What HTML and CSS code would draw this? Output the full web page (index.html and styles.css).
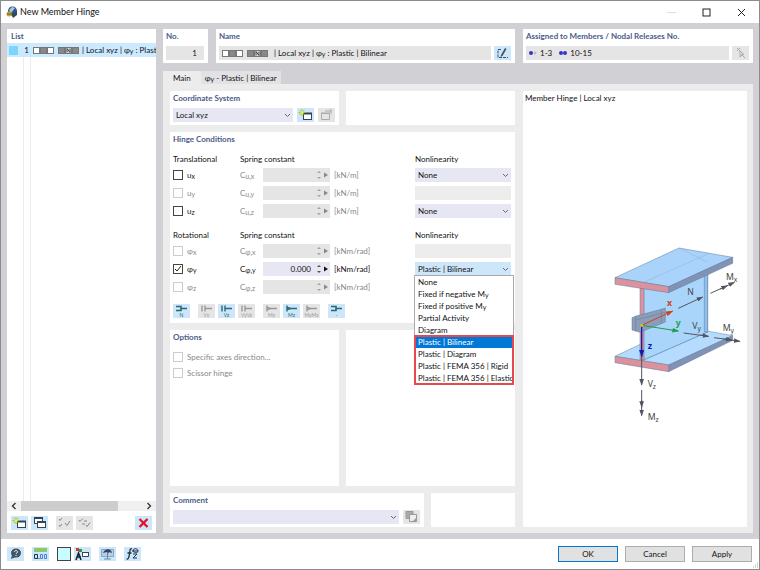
FILE: index.html
```html
<!DOCTYPE html>
<html lang="en">
<head>
<meta charset="utf-8">
<meta name="viewport" content="width=device-width, initial-scale=1">
<title>New Member Hinge</title>
<link rel="stylesheet" href="styles.css">
</head>
<body>
<!-- shared symbols -->
<svg class="defs" aria-hidden="true">
  <symbol id="boxes" viewBox="0 0 46 7">
    <g stroke="#777" fill="#fff">
      <rect x=".5" y=".5" width="6" height="6"/><rect x="7.5" y=".5" width="6" height="6" fill="#888"/><rect x="14.5" y=".5" width="6" height="6"/>
      <rect x="25.5" y=".5" width="6" height="6" fill="#888"/><rect x="32.5" y=".5" width="6" height="6" fill="#ddd"/><rect x="39.5" y=".5" width="6" height="6" fill="#888"/>
    </g>
    <path d="M34 5.5V1.5L37 5.5V1.5" fill="none" stroke="#222" stroke-width=".8"/>
  </symbol>
  <symbol id="newwin" viewBox="0 0 17 14">
    <rect x="6.5" y="5.500" width="8" height="6" fill="#fff" stroke="#345"/><path d="M6 5.5h9" stroke="#345" stroke-width="2"/>
    <path d="M5 1v7M1.500 4.500h7M2.500 2l5 5M7.500 2l-5 5" stroke="#9bc72c" stroke-width="1"/><circle cx="5" cy="4.500" r="1.500" fill="#e8f06a"/>
  </symbol>
  <symbol id="beamfork" viewBox="0 0 17 14">
    <path d="M3 2.5h5v4H3M8 4.500h6" fill="none" stroke="currentColor" stroke-width="1.600"/>
  </symbol>
  <symbol id="beamplate" viewBox="0 0 17 14">
    <path d="M4 1.5v6M7 1.500v6M7 4.500h7" fill="none" stroke="currentColor" stroke-width="1.400"/>
  </symbol>
  <symbol id="beamhinge" viewBox="0 0 17 14">
    <path d="M4 1.5v6M4 3.500l4 1-4 1M8 4.500h6" fill="none" stroke="currentColor" stroke-width="1.400"/>
  </symbol>
  <symbol id="arrows" viewBox="0 0 15 14">
    <path d="M2 5l2-2 2 2zM2 9l2 2 2-2z" fill="currentColor" opacity=".7"/><path d="M9 4.5v5l4-2.500z" fill="currentColor"/>
  </symbol>
</svg>

<div class="window">
  <header class="titlebar">
    <svg class="logo" viewBox="0 0 12 12"><circle cx="6.5" cy="5" r="4.500" fill="#315a85"/><path d="M3 4l3-3 3 1-4 5z" fill="#a9c6df"/><path d="M5 8l6-3v4l-4 3z" fill="#31485f"/><circle cx="3" cy="8" r="2.500" fill="#c4a83a"/><path d="M1 8h4" stroke="#725c17"/></svg>
    <h1>New Member Hinge</h1>
    <button class="win-btn" aria-label="Minimize" disabled><svg viewBox="0 0 9 9"><path d="M0 4.5h9" stroke="#ddd"/></svg></button>
    <button class="win-btn" aria-label="Maximize"><svg viewBox="0 0 9 9"><rect x="1" y="1" width="7" height="7" fill="none" stroke="#222"/></svg></button>
    <button class="win-btn" aria-label="Close"><svg viewBox="0 0 9 9"><path d="M1 1l7 7M8 1L1 8" stroke="#222"/></svg></button>
  </header>

  <div class="workspace">
    <aside class="panel list">
      <h2>List</h2>
      <div class="list-body">
        <div class="list-row selected">
          <span class="swatch"></span><span class="row-no">1</span>
          <svg class="boxes"><use href="#boxes"/></svg>
          <span class="row-name">| Local xyz | φ<sub>y</sub> : Plastic | Bilinear</span>
        </div>
        <div class="list-lines"></div>
      </div>
      <div class="scrollbar">
        <svg viewBox="0 0 10 10"><path d="M6.5 2L3.500 5l3 3" fill="none" stroke="#333" stroke-width="1.300"/></svg>
        <div class="track"><div class="thumb"></div></div>
        <svg viewBox="0 0 10 10"><path d="M3.5 2l3 3-3 3" fill="none" stroke="#333" stroke-width="1.300"/></svg>
      </div>
      <div class="toolbar">
        <button class="icon" aria-label="New"><svg><use href="#newwin"/></svg></button>
        <button class="icon" aria-label="Copy"><svg viewBox="0 0 17 14"><g fill="#fff" stroke="#345"><rect x="3.5" y="1.500" width="8" height="6"/><path d="M3 2h9" stroke-width="2"/><rect x="6.500" y="5.500" width="8" height="6"/><path d="M6 6h9" stroke-width="2"/></g></svg></button>
        <button class="icon off gap" aria-label="Select all" disabled><svg viewBox="0 0 17 14"><path d="M3 3l1 1.500L6 2M3 9l1 1.500L6 8M9 7l2 2.500L14 5" fill="none" stroke="#888"/></svg></button>
        <button class="icon off" aria-label="Invert selection" disabled><svg viewBox="0 0 17 14"><path d="M3 4l1 1.500L7 2.500M8 5h3M6 8h3M10 9l1 1.500 3-4" fill="none" stroke="#888"/></svg></button>
        <button class="icon push" aria-label="Delete"><svg viewBox="0 0 17 14"><path d="M4.500 3l8 8M12.500 3l-8 8" stroke="#e0142b" stroke-width="2.400"/></svg></button>
      </div>
    </aside>

    <main class="editor">
      <div class="top-row">
        <section class="panel">
          <h2><label for="no">No.</label></h2>
          <input class="field right" id="no" type="text" value="1" readonly>
        </section>
        <section class="panel">
          <h2>Name</h2>
          <div class="line">
            <div class="field grow"><svg class="boxes"><use href="#boxes"/></svg><span class="row-name">| Local xyz | φ<sub>y</sub> : Plastic | Bilinear</span></div>
            <button class="icon" aria-label="Edit name"><svg viewBox="0 0 17 14"><path d="M7 3.500H4v8h4M9 11.500h5" fill="none" stroke="#357" stroke-dasharray="3 1"/><path d="M7 9l4-7 1.500 1-4 7-2 1z" fill="#456"/></svg></button>
          </div>
        </section>
        <section class="panel">
          <h2>Assigned to Members / Nodal Releases No.</h2>
          <div class="line">
            <div class="field grow assigned">
              <svg class="dots" viewBox="0 0 8 4"><circle cx="2" cy="2" r="2" fill="#33c"/><circle cx="6" cy="2" r="1.500" fill="#bbc"/></svg><span>1-3</span>
              <svg class="dots" viewBox="0 0 8 4"><circle cx="2" cy="2" r="2" fill="#33c"/><circle cx="6" cy="2" r="2" fill="#33c"/></svg><span>10-15</span>
            </div>
            <button class="icon off" aria-label="Pick members" disabled><svg viewBox="0 0 17 14"><path d="M5 2l3 3M8 2L5 5M8 5v6l2-2 3 3M8 5l4 3.500-3 .5" fill="none" stroke="#aaa"/></svg></button>
          </div>
        </section>
      </div>

      <nav class="tabs">
        <button class="tab active">Main</button>
        <button class="tab">φ<sub>y</sub> - Plastic | Bilinear</button>
      </nav>

      <div class="tab-page">
        <div class="form">
          <div class="split">
            <section class="panel">
              <h2><label for="cs">Coordinate System</label></h2>
              <div class="line">
                <select class="field select grow" id="cs"><option>Local xyz</option></select>
                <button class="icon" aria-label="New coordinate system"><svg><use href="#newwin"/></svg></button>
                <button class="icon off" aria-label="Edit coordinate system" disabled><svg viewBox="0 0 17 14"><path d="M3.500 5.500h8v6h-8zM3 5h9M7 3h6v3M12 1l2 2" fill="none" stroke="#aaa"/></svg></button>
              </div>
            </section>
            <section class="panel"></section>
          </div>

          <section class="panel hinge">
            <h2>Hinge Conditions</h2>
            <div class="row head"><span>Translational</span><span class="wide">Spring constant</span><span class="last">Nonlinearity</span></div>
            <div class="row">
              <label class="check"><input type="checkbox"><span>u<sub>x</sub></span></label>
              <label class="dim" for="cux">C<sub>u,x</sub></label>
              <div class="spin"><input id="cux" type="text" disabled><svg><use href="#arrows"/></svg></div>
              <span class="unit dim">[kN/m]</span>
              <select class="field select" aria-label="Nonlinearity ux"><option>None</option></select>
            </div>
            <div class="row">
              <label class="check"><input type="checkbox" disabled><span>u<sub>y</sub></span></label>
              <label class="dim" for="cuy">C<sub>u,y</sub></label>
              <div class="spin"><input id="cuy" type="text" disabled><svg><use href="#arrows"/></svg></div>
              <span class="unit dim">[kN/m]</span>
              <select class="field" aria-label="Nonlinearity uy" disabled></select>
            </div>
            <div class="row">
              <label class="check"><input type="checkbox"><span>u<sub>z</sub></span></label>
              <label class="dim" for="cuz">C<sub>u,z</sub></label>
              <div class="spin"><input id="cuz" type="text" disabled><svg><use href="#arrows"/></svg></div>
              <span class="unit dim">[kN/m]</span>
              <select class="field select" aria-label="Nonlinearity uz"><option>None</option></select>
            </div>

            <div class="row head second"><span>Rotational</span><span class="wide">Spring constant</span><span class="last">Nonlinearity</span></div>
            <div class="row">
              <label class="check"><input type="checkbox" disabled><span>φ<sub>x</sub></span></label>
              <label class="dim" for="cpx">C<sub>φ,x</sub></label>
              <div class="spin"><input id="cpx" type="text" disabled><svg><use href="#arrows"/></svg></div>
              <span class="unit dim">[kNm/rad]</span>
              <select class="field" aria-label="Nonlinearity phi x" disabled></select>
            </div>
            <div class="row">
              <label class="check"><input type="checkbox" checked><span>φ<sub>y</sub></span></label>
              <label for="cpy">C<sub>φ,y</sub></label>
              <div class="spin on"><input id="cpy" type="text" value="0.000"><svg><use href="#arrows"/></svg></div>
              <span class="unit">[kNm/rad]</span>
              <div class="combo">
                <select class="field select open" aria-label="Nonlinearity phi y"><option>Plastic | Bilinear</option></select>
                <div class="menu" role="listbox" aria-label="Nonlinearity options">
                  <div role="option">None</div>
                  <div role="option">Fixed if negative M<sub>y</sub></div>
                  <div role="option">Fixed if positive M<sub>y</sub></div>
                  <div role="option">Partial Activity</div>
                  <div role="option">Diagram</div>
                  <div class="marked">
                    <div role="option" class="current" aria-selected="true">Plastic | Bilinear</div>
                    <div role="option">Plastic | Diagram</div>
                    <div role="option">Plastic | FEMA 356 | Rigid</div>
                    <div role="option">Plastic | FEMA 356 | Elastic</div>
                  </div>
                </div>
              </div>
            </div>
            <div class="row">
              <label class="check"><input type="checkbox" disabled><span>φ<sub>z</sub></span></label>
              <label class="dim" for="cpz">C<sub>φ,z</sub></label>
              <div class="spin"><input id="cpz" type="text" disabled><svg><use href="#arrows"/></svg></div>
              <span class="unit dim">[kNm/rad]</span>
            </div>

            <div class="toolbar presets">
              <button class="icon txt"><svg><use href="#beamfork"/></svg><span>N</span></button>
              <button class="icon txt off gap" disabled><svg><use href="#beamplate"/></svg><span>Vy</span></button>
              <button class="icon txt"><svg><use href="#beamplate"/></svg><span>Vz</span></button>
              <button class="icon txt off" disabled><svg><use href="#beamplate"/></svg><span>VyVz</span></button>
              <button class="icon txt off gap" disabled><svg><use href="#beamhinge"/></svg><span>My</span></button>
              <button class="icon txt"><svg><use href="#beamhinge"/></svg><span>Mz</span></button>
              <button class="icon txt off" disabled><svg><use href="#beamhinge"/></svg><span>MyMz</span></button>
              <button class="icon txt gap"><svg><use href="#beamfork"/></svg><span>-</span></button>
            </div>
          </section>

          <div class="split fill">
            <section class="panel options">
              <h2>Options</h2>
              <label class="check dim"><input type="checkbox" disabled><span>Specific axes direction...</span></label>
              <label class="check dim"><input type="checkbox" disabled><span>Scissor hinge</span></label>
            </section>
            <section class="panel"></section>
          </div>

          <div class="split comment">
            <section class="panel">
              <h2><label for="comment">Comment</label></h2>
              <div class="line">
                <select class="field select grow" id="comment"><option></option></select>
                <button class="icon off" aria-label="Comment templates" disabled><svg viewBox="0 0 17 14"><path d="M3 1.500h7v7H3z" fill="#aaa" stroke="#999"/><path d="M6.500 4.500h7v7h-7z" fill="#eee" stroke="#999"/><path d="M13 8v4H9z" fill="#999"/></svg></button>
              </div>
            </section>
            <section class="panel"></section>
          </div>
        </div>

        <section class="panel preview">
          <p>Member Hinge | Local xyz</p>
          <svg class="beam" viewBox="0 30 441 570">
            <defs>
              <marker id="tip" viewBox="0 0 20 14" refX="18" refY="7" markerWidth="20" markerHeight="14" markerUnits="userSpaceOnUse" orient="auto"><path d="M0 0l20 7-20 7z" fill="#54545f"/></marker>
              <marker id="tipx" viewBox="0 0 20 14" refX="18" refY="7" markerWidth="22" markerHeight="16" markerUnits="userSpaceOnUse" orient="auto"><path d="M0 0l20 7-20 7z" fill="#d63c1d"/></marker>
              <marker id="tipy" viewBox="0 0 20 14" refX="18" refY="7" markerWidth="20" markerHeight="16" markerUnits="userSpaceOnUse" orient="auto"><path d="M0 0l20 7-20 7z" fill="#1aa04a"/></marker>
              <marker id="tipz" viewBox="0 0 20 14" refX="18" refY="7" markerWidth="24" markerHeight="16" markerUnits="userSpaceOnUse" orient="auto"><path d="M0 0l20 7-20 7z" fill="#0a20b0"/></marker>
            </defs>
            <g stroke="#5a7b9c" stroke-width="1.500" stroke-linejoin="round">
              <path d="M45 379L237 288 398 317 206 405z" fill="#b5dcff"/>
              <path d="M206 405L398 317V331L206 425z" fill="#8292b5"/>
              <path d="M45 379L206 405V425L45 398z" fill="#dc929d"/>
              <path d="M131 173L323 85V306L131 390z" fill="#a9d5fb"/>
              <path d="M313 90V306L323 306V85z" fill="#8fc0ec"/>
              <path d="M120 174h12V391l-12-2z" fill="#dc929d"/>
              <path d="M45 143L237 54 398 82 206 170z" fill="#a9d3fa"/>
              <path d="M237 54L323 96M131 157L323 72" fill="none" opacity=".35"/>
              <path d="M206 170L398 82V100L206 188z" fill="#8292b5"/>
              <path d="M45 143L206 170V188L45 163z" fill="#dc929d"/>
              <path d="M131 390L323 306M210 301l25 4" fill="none" opacity=".6"/>
              <path d="M96 263L108 258 184 238 196 234V276L120 307 96 300z" fill="#8c9db8"/>
              <path d="M107 260V304M184 238V281M108 270L196 247" fill="none"/>
            </g>
            <g fill="none" stroke="#54545f" stroke-width="3">
              <path d="M235 235L308 201" marker-end="url(#tip)"/>
              <path d="M331 190L382 167" marker-end="url(#tip)"/><path d="M360 177L403 157" marker-end="url(#tip)"/>
              <path d="M251 309L326 319" marker-end="url(#tip)"/>
              <path d="M342 323L396 330" marker-end="url(#tip)"/><path d="M370 327L420 334" marker-end="url(#tip)"/>
              <path d="M125 380V465" marker-end="url(#tip)"/>
              <path d="M125 480V532" marker-end="url(#tip)"/><path d="M125 510V557" marker-end="url(#tip)"/>
              <path d="M125 286L218 243" stroke="#d63c1d" marker-end="url(#tipx)"/>
              <path d="M125 286L235 303" stroke="#1aa04a" marker-end="url(#tipy)"/>
              <path d="M125 286V380" stroke="#0a20b0" stroke-width="4" marker-end="url(#tipz)"/>
            </g>
            <circle cx="125" cy="286" r="5" fill="#d8b52a"/>
            <g class="beam-text">
              <text x="262" y="195">N</text>
              <text x="378" y="151">M<tspan class="s" dy="6">x</tspan></text>
              <text x="277" y="296">V<tspan class="s" dy="6">y</tspan></text>
              <text x="368" y="304">M<tspan class="s" dy="6">y</tspan></text>
              <text x="143" y="470">V<tspan class="s" dy="6">z</tspan></text>
              <text x="143" y="571">M<tspan class="s" dy="6">z</tspan></text>
              <text class="ax-x" x="201" y="228">x</text>
              <text class="ax-y" x="227" y="288">y</text>
              <text class="ax-z" x="143" y="357">z</text>
            </g>
          </svg>
        </section>
      </div>
    </main>
  </div>

  <footer class="footer">
    <button class="icon" aria-label="Help"><svg viewBox="0 0 17 14"><ellipse cx="9" cy="6" rx="5" ry="4.500" fill="#456"/><path d="M5 8l-1 4 5-2z" fill="#456"/><path d="M7.500 5c0-2 3-2 3 0 0 1-1.500 1-1.500 2M9 8v1" fill="none" stroke="#fff"/></svg></button>
    <button class="icon space" aria-label="Units"><svg viewBox="0 0 17 14"><path d="M2 1h13v4H2z" fill="#8dc96b"/><path d="M2.500 7.500h3v4h-3zM7 12v-1" fill="none" stroke="#234"/><path d="M8.500 7.500h2v4h-2zM12.500 7.500h2v4h-2z" fill="none" stroke="#4a7fe0"/></svg></button>
    <button class="color space" aria-label="Color"></button>
    <button class="icon" aria-label="Display properties"><svg viewBox="0 0 17 14"><path d="M2 1h3v3H2z" fill="#d33"/><path d="M5 2h3v3H5z" fill="#2a9a3a"/><path d="M2 13l2.500-7L7 13M3 10h4" fill="none" stroke="#123" stroke-width="1.500"/><path d="M8.500 5.500h6v4h-6zM8 5.500h7" fill="#fff" stroke="#345"/></svg></button>
    <button class="icon space" aria-label="View"><svg viewBox="0 0 17 14"><path d="M2.500 2.500h12v7h-12z" fill="#b5cfe8" stroke="#8ab"/><path d="M4 6c2-5 8-5 9 0l-3-1-1 2-1-2z" fill="#346"/><path d="M8.500 6v6M5 12h7" stroke="#68a"/></svg></button>
    <button class="icon space" aria-label="Formula"><svg viewBox="0 0 17 14"><path d="M8 2c-2-1-2 1-2.500 5S4 12.500 2.500 12M3.500 6h4" fill="none" stroke="#234" stroke-width="1.300"/><path d="M9 7h4l-4 4h4M9 4c0-3 5-3 5 0s-5 1-5 0M8 4h6" fill="none" stroke="#234"/></svg></button>
    <div class="actions">
      <button class="btn primary">OK</button>
      <button class="btn">Cancel</button>
      <button class="btn">Apply</button>
    </div>
    <svg class="grip" viewBox="0 0 7 7"><path d="M5 1h1M3 3h1M5 3h1M1 5h1M3 5h1M5 5h1" stroke="#aaa"/></svg>
  </footer>
</div>
</body>
</html>
```
FILE: styles.css
```css
* {
  box-sizing: border-box;
}
body {
  margin: 0;
  font-family: Lato, "Noto Sans", sans-serif;
  font-size: 8px;
  line-height: 12px;
  color: #111;
}
button, input, select {
  font: inherit;
  color: inherit;
  margin: 0;
  padding: 0;
  border: 0;
  border-radius: 0;
  appearance: none;
}
h1, h2, p {
  margin: 0;
}
sub {
  font-size: 7px;
  line-height: 0;
  vertical-align: -1px;
}
.defs {
  display: block;
  width: 0;
  height: 0;
}
.window {
  display: flex;
  flex-direction: column;
  min-height: 100vh;
  border: 1px solid #8c8c8c;
  background: #fff;
}

/* title bar */
.titlebar {
  display: flex;
  align-items: center;
  height: 22px;
  padding: 0 8px 0 5px;
}
.logo {
  width: 12px;
  height: 12px;
  margin-right: 2px;
}
.titlebar h1 {
  flex: 1;
  font-size: 9px;
  font-weight: normal;
}
.win-btn {
  width: 19px;
  height: 20px;
  margin-left: 16px;
  background: none;
}
.win-btn svg {
  width: 9px;
  height: 9px;
  vertical-align: middle;
}

/* layout */
.workspace {
  flex: 1;
  display: flex;
  gap: 7px;
  padding: 6px;
  background: #d0d0d5;
}
.panel {
  background: #fff;
  padding: 2px 4px 3px 3px;
  min-width: 0;
}
.panel h2 {
  font-size: 8px;
  font-weight: bold;
  color: #4b5b88;
  line-height: 10px;
  margin-bottom: 5px;
}
.editor {
  flex: 1;
  min-width: 0;
  display: flex;
  flex-direction: column;
}
.top-row {
  display: grid;
  grid-template-columns: 45px 1fr 230px;
  gap: 8px;
}
.line {
  display: flex;
  gap: 3px;
}
.grow {
  flex: 1;
  min-width: 0;
}
.field {
  display: flex;
  align-items: center;
  gap: 3px;
  width: 100%;
  height: 14px;
  padding: 0 3px;
  background: #e5e5e5;
}
.field.right {
  text-align: right;
  padding-right: 7px;
}
.select {
  background: #e7e7f3 url("data:image/svg+xml,%3Csvg xmlns='http://www.w3.org/2000/svg' width='7' height='5'%3E%3Cpath d='M1 1l2.500 2.500L6 1' fill='none' stroke='%23667'/%3E%3C/svg%3E") no-repeat right 2px center;
}
.boxes {
  flex: none;
  width: 46px;
  height: 7px;
}
.row-name {
  margin-left: 3px;
}
.assigned .dots {
  width: 8px;
  height: 4px;
}
.assigned span {
  margin-right: 4px;
}

/* icon buttons */
.icon {
  flex: none;
  width: 17px;
  height: 14px;
  background: #cde6fa;
}
.icon svg {
  display: block;
  width: 17px;
  height: 14px;
}
.icon.off {
  background: #e5e5e5;
}
.toolbar {
  display: flex;
  gap: 3px;
}
.toolbar .gap {
  margin-left: 5px;
}
.toolbar .push {
  margin-left: auto;
}
.icon.txt {
  display: flex;
  flex-direction: column;
  align-items: center;
  color: #276a70;
}
.icon.txt.off {
  color: #999;
}
.icon.txt svg {
  flex: none;
  margin-bottom: -6px;
}
.icon.txt span {
  font-size: 5px;
  line-height: 6px;
}

/* list */
.list {
  width: 149px;
  display: flex;
  flex-direction: column;
  padding: 2px 0 3px;
}
.list h2 {
  padding: 0 4px;
  margin-bottom: 2px;
}
.list-body {
  flex: 1;
  display: flex;
  flex-direction: column;
}
.list-row {
  display: flex;
  align-items: center;
  height: 14px;
  padding-left: 2px;
  overflow: hidden;
  white-space: nowrap;
}
.list-row.selected {
  background: #cbe9ff;
}
.swatch {
  flex: none;
  width: 9px;
  height: 9px;
  background: #7fd4fb;
}
.row-no {
  flex: none;
  width: 15px;
  padding-right: 4px;
  text-align: right;
}
.list-lines {
  flex: 1;
  width: 8px;
  margin-left: 16px;
  border: solid #ececec;
  border-width: 0 1px;
}
.scrollbar {
  display: flex;
  height: 10px;
  margin-bottom: 5px;
  background: #f0f0f0;
}
.scrollbar svg {
  width: 14px;
  height: 10px;
}
.track {
  flex: 1;
}
.thumb {
  width: 80%;
  height: 10px;
  background: #cdcdcd;
}
.list .toolbar {
  padding: 0 4px;
}

/* tabs */
.tabs {
  display: flex;
  height: 13px;
  margin-top: 8px;
}
.tab {
  padding: 0 4px;
  background: #e2e2e4;
}
.tab.active {
  padding: 0 10px;
  background: #ececec;
}
.tab-page {
  flex: 1;
  display: flex;
  gap: 8px;
  padding: 7px 6px 6px 7px;
  background: #ececec;
}
.form {
  flex: 1;
  min-width: 0;
  display: flex;
  flex-direction: column;
  gap: 7px;
}
.split {
  display: grid;
  grid-template-columns: 1fr 1fr;
  gap: 7px;
}
.split.fill {
  flex: 1;
}
.split.comment {
  grid-template-columns: 3fr 1fr;
}
.split .line {
  gap: 4px;
}

/* hinge conditions */
.hinge {
  padding-bottom: 5px;
}
.hinge h2 {
  margin-bottom: 9px;
}
.row {
  display: grid;
  grid-template-columns: 67px 23px 67px 1fr 96px;
  align-items: center;
  height: 14px;
  margin-bottom: 4px;
}
.row.head {
  height: 12px;
  margin-bottom: 3px;
}
.row.second {
  margin-top: 11px;
}
.wide {
  grid-column: 2 / 4;
}
.last {
  grid-column: 5;
}
.unit {
  padding-left: 4px;
}
.dim {
  color: #888;
}
.check {
  display: flex;
  align-items: center;
  gap: 4px;
}
.check input {
  width: 10px;
  height: 10px;
  border: 1px solid #444;
  background: #fff;
}
.check input:disabled {
  border-color: #ccc;
}
.check input:disabled + span {
  color: #888;
}
.check input:checked {
  background: url("data:image/svg+xml,%3Csvg xmlns='http://www.w3.org/2000/svg' width='8' height='8'%3E%3Cpath d='M1 4l2 2 4-5' fill='none' stroke='%23222'/%3E%3C/svg%3E") no-repeat center;
}
.spin {
  display: flex;
  height: 14px;
  background: #e5e5e5;
  color: #888;
}
.spin.on {
  background: #e7e7f3;
  color: #111;
}
.spin input {
  flex: 1;
  min-width: 0;
  padding-right: 4px;
  background: none;
  text-align: right;
}
.spin svg {
  width: 15px;
  height: 14px;
}
.combo {
  position: relative;
}
.open {
  background-color: #cde6fa;
}
.menu {
  position: absolute;
  top: 100%;
  left: 0;
  z-index: 2;
  min-width: 100%;
  background: #fff;
  box-shadow: 0 0 0 1px #aaa;
  white-space: nowrap;
}
.menu [role="option"] {
  height: 12px;
  padding-left: 3px;
}
.menu .current {
  background: #0078d7;
  color: #fff;
}
.marked {
  outline: 2px solid #e5484d;
  outline-offset: -1px;
}
.presets {
  margin-top: 10px;
}

.options h2 {
  margin-bottom: 9px;
}
.options .check {
  margin-bottom: 4px;
}

/* preview */
.preview {
  width: 224px;
  display: flex;
  flex-direction: column;
  padding: 1px 0 0 2px;
}
.beam {
  width: 147px;
  height: 190px;
  margin-top: 136px;
  align-self: flex-end;
}
.beam-text {
  font-family: "Noto Sans", sans-serif;
  font-size: 26px;
  fill: #444;
}
.beam-text .s {
  font-size: 20px;
}
.ax-x, .ax-y, .ax-z {
  font-weight: bold;
}
.ax-x {
  fill: #d63c1d;
}
.ax-y {
  fill: #1aa04a;
}
.ax-z {
  fill: #0a20b0;
}

/* footer */
.footer {
  position: relative;
  display: flex;
  align-items: center;
  height: 30px;
  padding: 0 7px 0 6px;
}
.footer .space {
  margin-left: 8px;
}
.color {
  width: 14px;
  height: 14px;
  margin-right: 3px;
  border: 1px solid #444;
  background: #c8fcff;
}
.actions {
  display: flex;
  gap: 7px;
  margin-left: auto;
}
.btn {
  width: 60px;
  height: 16px;
  background: #e1e1e1;
  border: 1px solid #adadad;
}
.btn.primary {
  border-color: #0078d7;
}
.grip {
  position: absolute;
  right: 0;
  bottom: 0;
  width: 7px;
  height: 7px;
}
```
